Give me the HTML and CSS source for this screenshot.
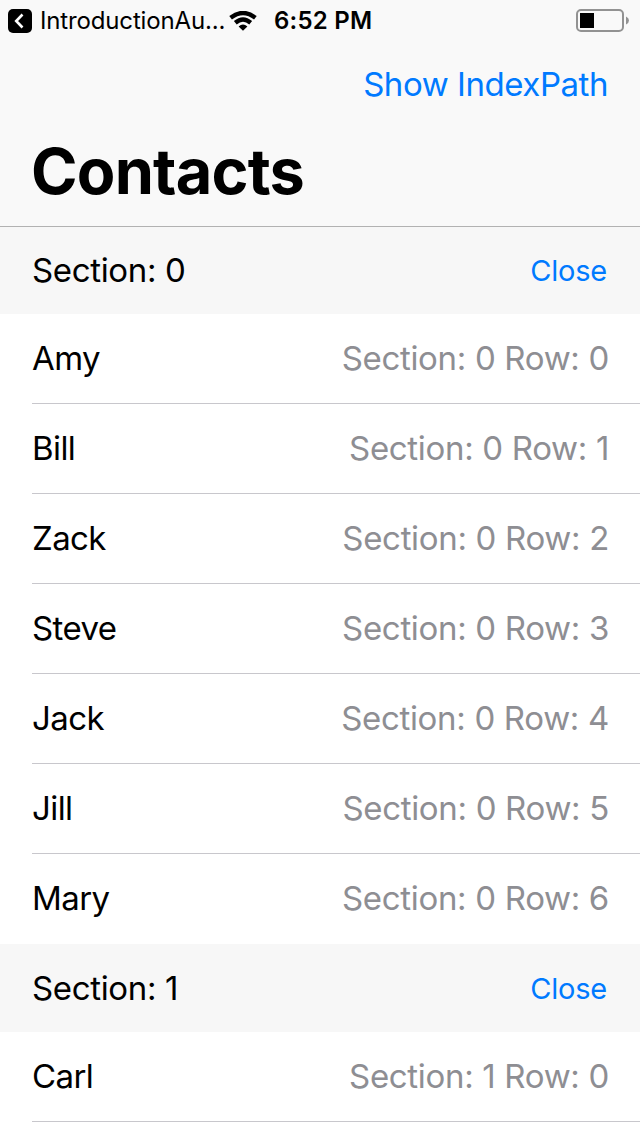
FILE: index.html
```html
<!DOCTYPE html>
<html lang="en">
<head>
<meta charset="utf-8">
<title>Contacts</title>
<link rel="stylesheet" href="styles.css">
</head>
<body>
<header class="header">
  <div class="status">
    <svg class="back" width="24" height="24" viewBox="0 0 24 24"><rect width="24" height="24" rx="5"/><path d="M14.500 5.500 8.200 12l6.300 6.500" fill="none" stroke="#fff" stroke-width="2.600"/></svg>
    <span class="app">IntroductionAu...</span>
    <svg class="wifi" width="28" height="20" viewBox="0 0 28 20"><path d="M14 19.800 9.600 15.400Q14 11.600 18.400 15.400Z"/><path d="M6.300 11.800Q14 5.300 21.700 11.800M1.600 6.800Q14-2.800 26.400 6.800" fill="none" stroke="#000" stroke-width="4.400"/></svg>
    <span class="time">6:52 PM</span>
    <svg class="battery" width="53" height="24" viewBox="0 0 53 24"><rect x="1" y="1" width="46" height="21" rx="4" fill="none" stroke="#929292" stroke-width="2"/><rect x="4" y="4" width="14" height="15"/><path d="M50 7.500q3 1.500 3 4t-3 4z" fill="#929292"/></svg>
  </div>
  <div class="toolbar">Show IndexPath</div>
  <h1 class="title">Contacts</h1>
</header>
<main>
  <div class="section"><span>Section: 0</span><span class="close">Close</span></div>
  <div class="row"><span class="name">Amy</span><span class="detail">Section: 0 Row: 0</span></div>
  <div class="row"><span class="name">Bill</span><span class="detail">Section: 0 Row: 1</span></div>
  <div class="row"><span class="name">Zack</span><span class="detail">Section: 0 Row: 2</span></div>
  <div class="row"><span class="name">Steve</span><span class="detail">Section: 0 Row: 3</span></div>
  <div class="row"><span class="name">Jack</span><span class="detail">Section: 0 Row: 4</span></div>
  <div class="row"><span class="name">Jill</span><span class="detail">Section: 0 Row: 5</span></div>
  <div class="row last"><span class="name">Mary</span><span class="detail">Section: 0 Row: 6</span></div>
  <div class="section next"><span>Section: 1</span><span class="close">Close</span></div>
  <div class="row"><span class="name">Carl</span><span class="detail">Section: 1 Row: 0</span></div>
</main>
</body>
</html>
```

FILE: styles.css
```css
* { box-sizing: border-box; }
body { margin: 0; width: 640px; height: 1136px; overflow: hidden; background: #fff; color: #000; font: 33px/40px Inter, sans-serif; letter-spacing: -0.35px; white-space: nowrap; }
.header { height: 227px; background: #f9f9f9; border-bottom: 1px solid #b2b2b2; }
.status { height: 40px; display: flex; align-items: center; padding: 1px 11px 0 8px; font-size: 24px; }
.app { width: 189px; margin-left: 8px; letter-spacing: -0.15px; }
.wifi { margin-right: 17px; }
.time { font-weight: 600; letter-spacing: 0.25px; }
.battery { margin-left: auto; }
.toolbar { height: 88px; padding: 24px 32px; text-align: right; color: #007aff; letter-spacing: -0.45px; }
.title { margin: 0; padding: 7px 31px; font-size: 63px; line-height: 72px; font-weight: 700; letter-spacing: -0.8px; }
.section { height: 87px; display: flex; align-items: center; justify-content: space-between; padding: 0 33px 2px 32px; background: #f7f7f7; }
.close { padding-top: 2px; color: #007aff; font-size: 29px; letter-spacing: -0.2px; }
.row { height: 90px; margin-left: 32px; padding: 0 31px 2px 0; display: flex; align-items: center; justify-content: space-between; border-bottom: 1px solid #c8c7cc; }
.last { border-bottom-color: transparent; }
.next { height: 88px; padding-bottom: 0; }
.name { letter-spacing: -0.6px; }
.detail { color: #8e8e93; letter-spacing: -0.32px; }
```
